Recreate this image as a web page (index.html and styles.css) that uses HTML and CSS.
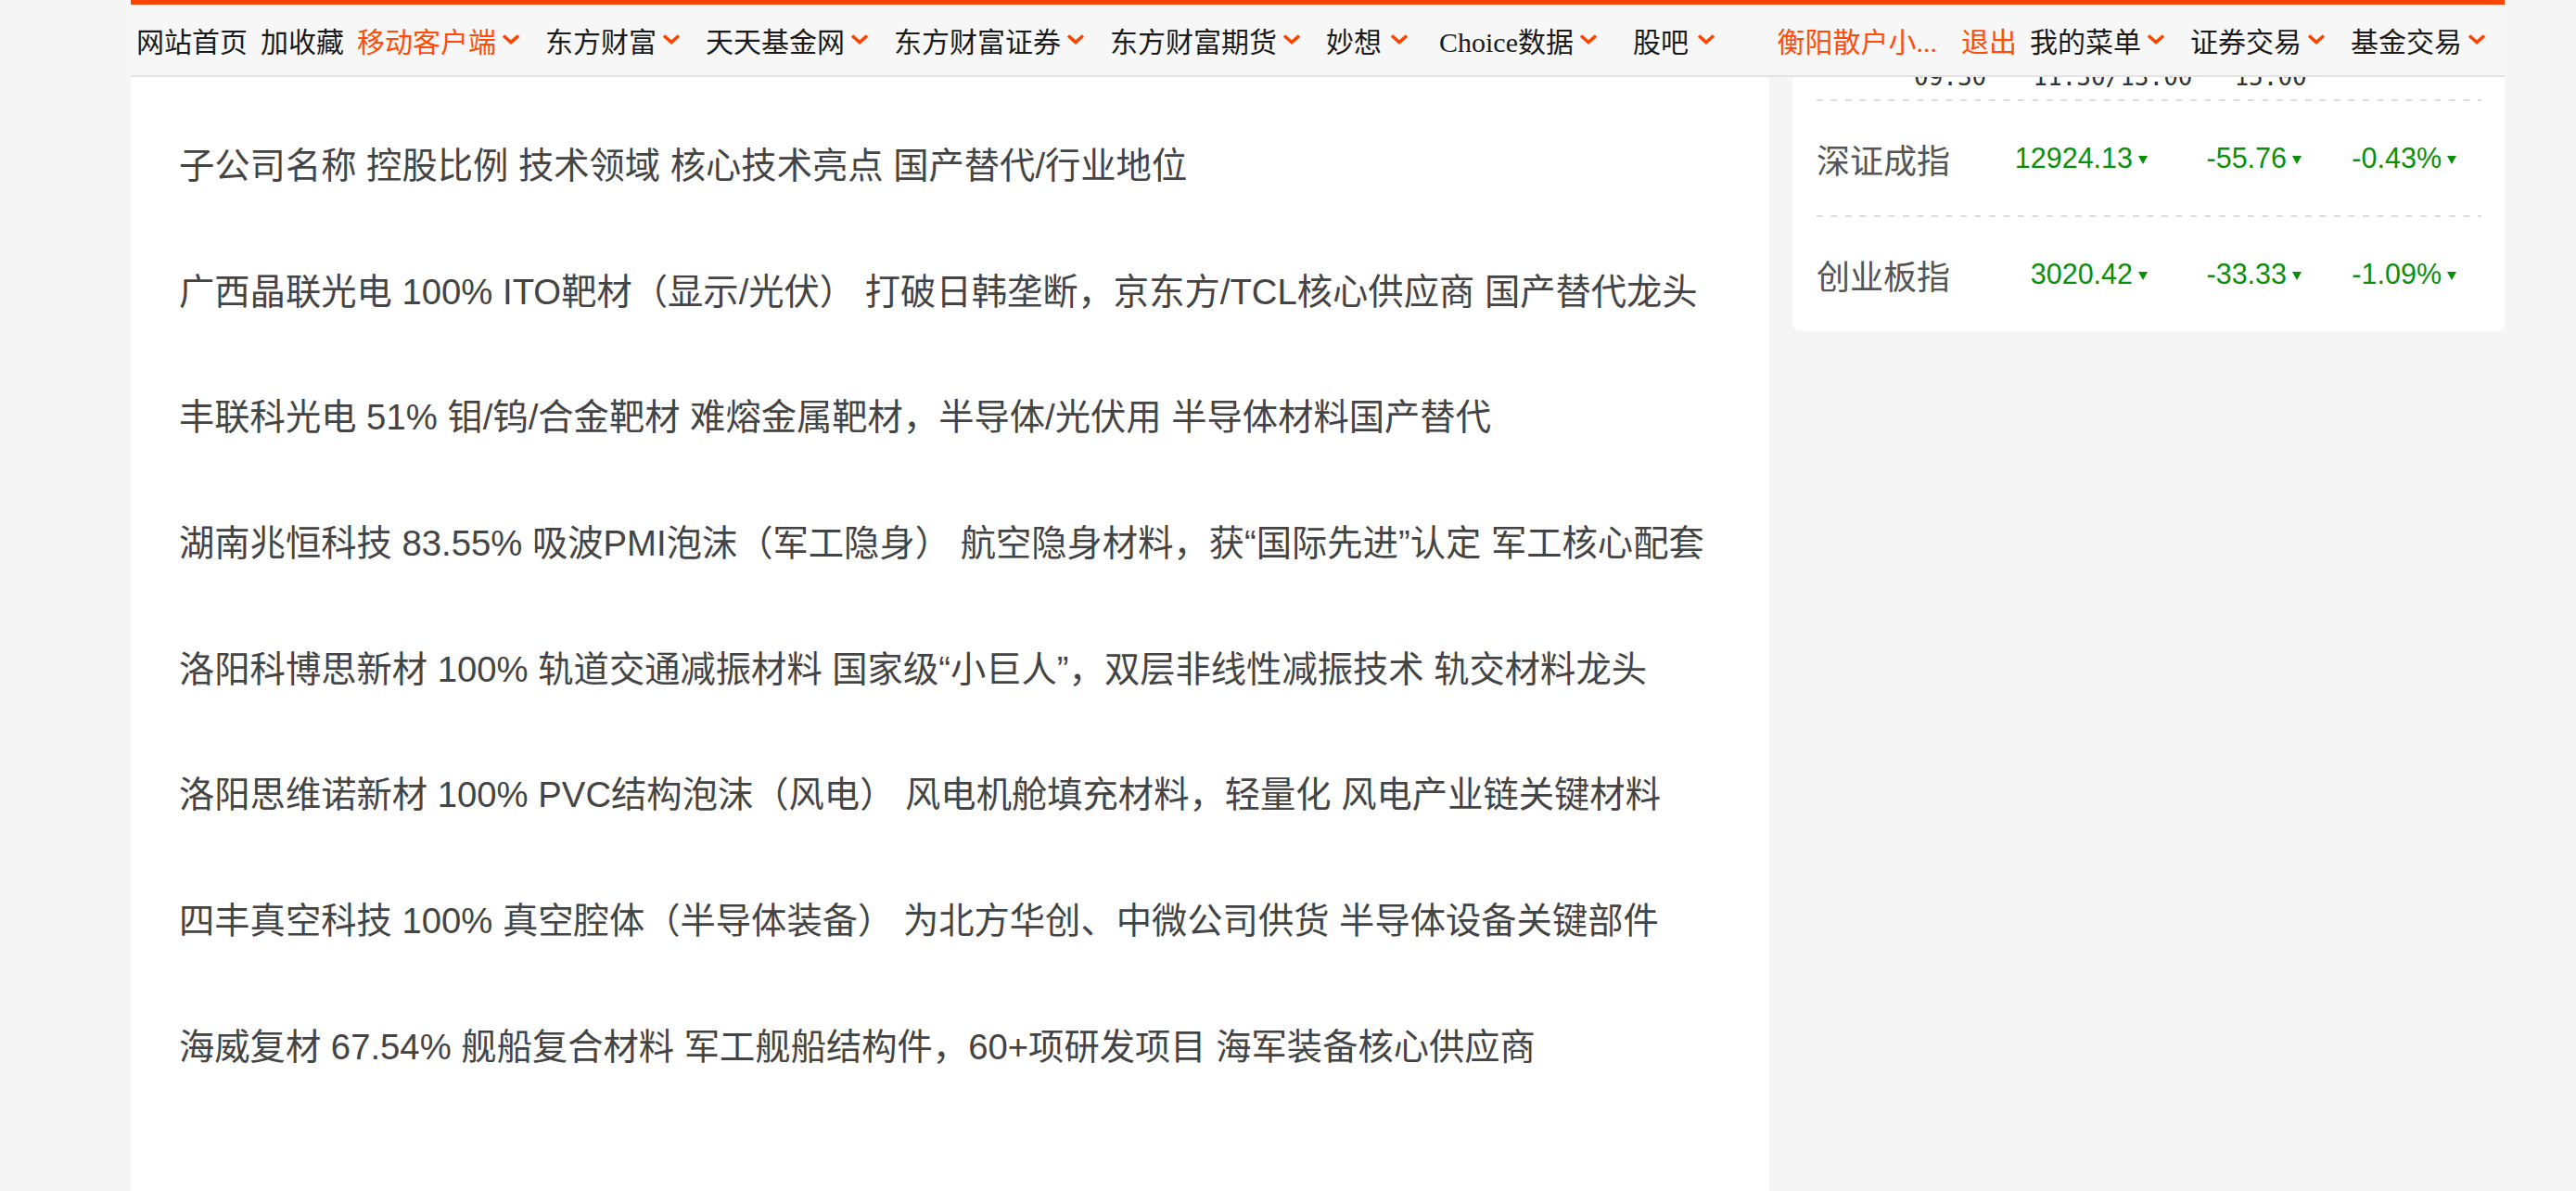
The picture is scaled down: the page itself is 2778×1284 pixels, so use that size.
FILE: index.html
```html
<!DOCTYPE html>
<html lang="zh-CN">
<head>
  <meta charset="UTF-8">
  <meta name="viewport" content="width=device-width, initial-scale=1.0">
  <title>东方财富 - 子公司一览</title>
  <link rel="stylesheet" href="styles.css">
</head>
<body>

<nav class="topnav">
  <div class="nav-group">
    <a class="nav-link">网站首页</a>
    <a class="nav-link">加收藏</a>
    <a class="nav-link orange has-menu">移动客户端<svg class="arrow" viewBox="0 0 20 12"><path d="M2 2.5 L10 9.5 L18 2.5"/></svg></a>
    <a class="nav-link has-menu">东方财富<svg class="arrow" viewBox="0 0 20 12"><path d="M2 2.5 L10 9.5 L18 2.5"/></svg></a>
    <a class="nav-link has-menu">天天基金网<svg class="arrow" viewBox="0 0 20 12"><path d="M2 2.5 L10 9.5 L18 2.5"/></svg></a>
    <a class="nav-link has-menu">东方财富证券<svg class="arrow" viewBox="0 0 20 12"><path d="M2 2.5 L10 9.5 L18 2.5"/></svg></a>
    <a class="nav-link has-menu">东方财富期货<svg class="arrow" viewBox="0 0 20 12"><path d="M2 2.5 L10 9.5 L18 2.5"/></svg></a>
    <a class="nav-link has-menu short">妙想<svg class="arrow" viewBox="0 0 20 12"><path d="M2 2.5 L10 9.5 L18 2.5"/></svg></a>
    <a class="nav-link has-menu choice">Choice数据<svg class="arrow" viewBox="0 0 20 12"><path d="M2 2.5 L10 9.5 L18 2.5"/></svg></a>
    <a class="nav-link has-menu short">股吧<svg class="arrow" viewBox="0 0 20 12"><path d="M2 2.5 L10 9.5 L18 2.5"/></svg></a>
  </div>
  <div class="nav-group">
    <a class="nav-link orange user">衡阳散户小...</a>
    <a class="nav-link orange">退出</a>
    <a class="nav-link has-menu">我的菜单<svg class="arrow" viewBox="0 0 20 12"><path d="M2 2.5 L10 9.5 L18 2.5"/></svg></a>
    <a class="nav-link has-menu">证券交易<svg class="arrow" viewBox="0 0 20 12"><path d="M2 2.5 L10 9.5 L18 2.5"/></svg></a>
    <a class="nav-link has-menu">基金交易<svg class="arrow" viewBox="0 0 20 12"><path d="M2 2.5 L10 9.5 L18 2.5"/></svg></a>
  </div>
</nav>

<div class="layout">
  <div class="article">
    <p>子公司名称 控股比例 技术领域 核心技术亮点 国产替代/行业地位</p>
    <p>广西晶联光电 100% ITO靶材（显示/光伏） 打破日韩垄断，京东方/TCL核心供应商 国产替代龙头</p>
    <p>丰联科光电 51% 钼/钨/合金靶材 难熔金属靶材，半导体/光伏用 半导体材料国产替代</p>
    <p>湖南兆恒科技 83.55% 吸波PMI泡沫（军工隐身） 航空隐身材料，获“国际先进”认定 军工核心配套</p>
    <p>洛阳科博思新材 100% 轨道交通减振材料 国家级“小巨人”，双层非线性减振技术 轨交材料龙头</p>
    <p>洛阳思维诺新材 100% PVC结构泡沫（风电） 风电机舱填充材料，轻量化 风电产业链关键材料</p>
    <p>四丰真空科技 100% 真空腔体（半导体装备） 为北方华创、中微公司供货 半导体设备关键部件</p>
    <p>海威复材 67.54% 舰船复合材料 军工舰船结构件，60+项研发项目 海军装备核心供应商</p>
  </div>

  <div class="sidebar">
    <div class="quote-card">
      <div class="time-row dashed">
        <span>09:30</span>
        <span>11:30/13:00</span>
        <span>15:00</span>
      </div>
      <div class="quote-row dashed">
        <span class="index-name">深证成指</span>
        <span class="num down">12924.13</span>
        <span class="num down">-55.76</span>
        <span class="num down">-0.43%</span>
      </div>
      <div class="quote-row">
        <span class="index-name">创业板指</span>
        <span class="num down">3020.42</span>
        <span class="num down">-33.33</span>
        <span class="num down">-1.09%</span>
      </div>
    </div>
  </div>
</div>

</body>
</html>
```

FILE: styles.css
```css
body {
  margin: 0;
  background: #f5f5f5;
  font-family: "Liberation Sans", "Noto Sans CJK SC", sans-serif;
}

/* top bar, stays over the page */
.topnav {
  position: fixed;
  top: 0;
  left: 141px;
  width: 2560px;
  height: 83px;
  box-sizing: border-box;
  padding: 0 20px 0 6px;
  display: flex;
  align-items: center;
  justify-content: space-between;
  background: #f7f7f7;
  border-top: 5px solid #ff4400;
  border-bottom: 2px solid #e3e3e3;
  font-family: "Liberation Serif", "Noto Sans CJK SC", serif;
  font-size: 30px;
  color: #1a1a1a;
  z-index: 10;
}
.nav-group {
  display: flex;
  align-items: center;
}
.nav-link {
  display: flex;
  align-items: center;
  margin-right: 14px;
  cursor: pointer;
  white-space: nowrap;
}
.nav-link.has-menu {
  margin-right: 27px;
}
.nav-link.short {
  margin-right: 33px;
}
.nav-link.choice {
  margin-right: 38px;
}
.nav-group .nav-link:last-child {
  margin-right: 0;
}
.nav-link.orange {
  color: #ff4c0a;
}
.nav-link.user {
  margin-right: 26px;
}
.arrow {
  width: 20px;
  height: 12px;
  margin-left: 6px;
  margin-top: -2px;
}
.short .arrow {
  margin-left: 9px;
}
.arrow path {
  fill: none;
  stroke: #ff4400;
  stroke-width: 3.6;
}

/* page */
.layout {
  display: flex;
  gap: 25px;
  width: 2560px;
  margin-left: 141px;
}
.article {
  flex: 1;
  background: #fff;
  padding: 150px 52px 300px;
  color: #444;
  font-size: 38.3px;
}
.article p {
  margin: 0 0 78.7px;
  line-height: 57px;
  white-space: nowrap;
}

.sidebar {
  width: 768px;
  align-self: flex-start;
}
.quote-card {
  background: #fff;
  border-radius: 0 0 8px 8px;
  padding: 0 25px 0 26px;
}
.dashed {
  background: linear-gradient(to right, #dcdcdc 7px, transparent 7px) left bottom / 15.5px 2px repeat-x;
}
.time-row {
  display: flex;
  align-items: flex-end;
  gap: 50px;
  height: 109px;
  box-sizing: border-box;
  padding: 0 0 11px 105px;
  font-family: "DejaVu Sans Mono", monospace;
  font-size: 26px;
  line-height: 30px;
  color: #333;
}
.time-row span:last-child {
  margin-left: -5px;
}
.quote-row {
  display: grid;
  grid-template-columns: 1fr 190px 166px 167px;
  align-items: center;
  height: 125px;
  box-sizing: border-box;
  padding: 0 27px 2px 0;
}
.quote-row:last-child {
  height: 123px;
  padding-bottom: 0;
}
.index-name {
  font-size: 36px;
  color: #555;
}
.num {
  justify-self: end;
  display: flex;
  align-items: center;
  font-size: 30.5px;
}
.num.down {
  color: #0a8f0a;
}
.num.down::after {
  content: "";
  margin-left: 6px;
  margin-top: 4px;
  border-left: 5.5px solid transparent;
  border-right: 5.5px solid transparent;
  border-top: 9px solid currentColor;
}
```
